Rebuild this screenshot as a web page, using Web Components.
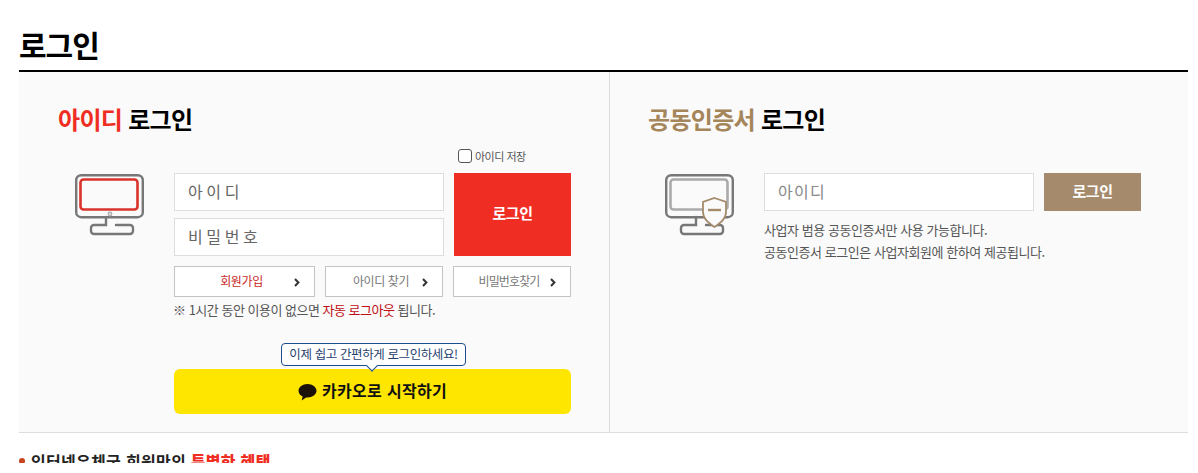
<!DOCTYPE html>
<html lang="ko">
<head>
<meta charset="utf-8">
<title>로그인</title>
<style>
html, body { margin: 0; background: #fff; }
body { font-family: "Noto Sans CJK KR", "Noto Sans", sans-serif; color: #333; }
</style>
</head>
<body>
<login-page>
  <id-login slot="left"></id-login>
  <cert-login slot="right"></cert-login>
</login-page>

<script>
const FONT = '"Noto Sans CJK KR", "Noto Sans", sans-serif';

class LoginPage extends HTMLElement {
  constructor() {
    super();
    this.attachShadow({ mode: 'open' }).innerHTML = `
    <style>
    :host { display: block; height: 463px; overflow: hidden; padding: 0 10px 0 19px; font-family: ${FONT}; }
    h1 { margin: 0; height: 70px; box-sizing: border-box; padding-top: 22px; font-size: 30px; line-height: 44px; letter-spacing: -1px; font-weight: 700; color: #000; }
    .panel { display: flex; box-sizing: border-box; height: 363px; background: #fafafa; border-top: 2px solid #000; border-bottom: 1px solid #ddd; }
    ::slotted([slot=left]) { width: 591px; border-right: 1px solid #ddd; }
    ::slotted([slot=right]) { flex: 1; }
    .benefit { margin: 16px 0 0; font-size: 16px; line-height: 24px; font-weight: 700; color: #222; display: flex; align-items: center; gap: 6px; letter-spacing: .3px; }
    .benefit i { width: 6px; height: 6px; border-radius: 50%; background: #c8451f; flex: none; }
    .benefit b { color: #f02d23; }
    </style>
    <h1>로그인</h1>
    <div class="panel"><slot name="left"></slot><slot name="right"></slot></div>
    <p class="benefit"><i></i><span>인터넷우체국 회원만의 <b>특별한 혜택</b></span></p>
    `;
  }
}

class PanelTitle extends HTMLElement {
  constructor() {
    super();
    this.attachShadow({ mode: 'open' }).innerHTML = `
    <style>
    :host { display: block; font-size: 24px; line-height: 36px; font-weight: 700; letter-spacing: -.7px; color: #000; }
    </style>
    <slot></slot>
    `;
  }
}

class TextField extends HTMLElement {
  constructor() {
    super();
    this.attachShadow({ mode: 'open' }).innerHTML = `
    <style>
    :host { display: flex; align-items: center; box-sizing: border-box; width: 270px; height: 38px; padding: 0 0 3px 13px; background: #fff; border: 1px solid #ddd; font-size: 16px; letter-spacing: var(--field-spacing, 3.6px); color: var(--field-color, #666); }
    </style>
    <slot></slot>
    `;
  }
}

class LinkButton extends HTMLElement {
  constructor() {
    super();
    this.attachShadow({ mode: 'open' }).innerHTML = `
    <style>
    :host { display: flex; align-items: center; box-sizing: border-box; height: 31px; background: #fff; border: 1px solid #c4c4c4; font-size: 12px; letter-spacing: -.4px; color: #777; }
    .label { flex: 1; padding: 0 0 3px 14px; text-align: center; }
    svg { flex: none; width: 6px; height: 9px; margin: 1px 14px 0 0; }
    </style>
    <span class="label"><slot></slot></span>
    <svg viewBox="0 0 6 9"><path d="M1 1l3.400 3.500L1 8" fill="none" stroke="#333" stroke-width="2"/></svg>
    `;
  }
}

class MonitorIcon extends HTMLElement {
  constructor() {
    super();
    const cert = this.hasAttribute('cert');
    const screen = cert
      ? `<rect x="5.500" y="5.500" width="57" height="30" rx="3" fill="none" stroke="#aaa" stroke-width="2.600"/>`
      : `<rect x="5.500" y="5.500" width="57" height="30" rx="3" fill="none" stroke="#d9332b" stroke-width="2.600"/>
         <circle cx="35" cy="40" r="1.800" fill="#ddd" stroke="#aaa" stroke-width="1.200"/>`;
    const shield = cert
      ? `<path d="M49.500 24L61 28v10c0 7-6 11-11.500 15-5.500-4-11.500-8-11.500-15V28z" fill="#fafafa" stroke="#a58b6c" stroke-width="1.800"/>
         <path d="M43 36h13" stroke="#a58b6c" stroke-width="2.400"/>`
      : '';
    this.attachShadow({ mode: 'open' }).innerHTML = `
    <style>
    :host { display: block; width: 69px; height: 62px; }
    svg { display: block; }
    </style>
    <svg width="69" height="62" viewBox="0 0 69 62">
      <rect x="1.200" y="1.200" width="66.600" height="42" rx="5" fill="none" stroke="#777" stroke-width="2.400"/>
      <path d="M31 43v8H19a3 3 0 0 0-3 3v3a3 3 0 0 0 3 3h36a3 3 0 0 0 3-3v-3a3 3 0 0 0-3-3H41" fill="none" stroke="#777" stroke-width="2.400" stroke-linecap="round"/>
      ${screen}${shield}
    </svg>
    `;
  }
}

class IdLogin extends HTMLElement {
  constructor() {
    super();
    this.attachShadow({ mode: 'open' }).innerHTML = `
    <style>
    :host { display: block; box-sizing: border-box; padding: 29px 0 0 39px; font-family: ${FONT}; }
    panel-title em { font-style: normal; color: #f02d23; }
    .save { display: flex; align-items: center; gap: 3px; height: 14px; margin: 12px 0 0 400px; font-size: 11px; letter-spacing: -.5px; color: #555; white-space: nowrap; }
    .save i { width: 12px; height: 12px; border: 1px solid #555; border-radius: 3px; background: #fff; flex: none; }
    .body { display: flex; margin: 10px 0 0 17px; }
    .icon-col { width: 99px; padding-top: 1px; }
    .form { width: 397px; display: grid; grid-template-columns: 270px 117px; column-gap: 10px; }
    .fields { display: grid; row-gap: 7px; }
    .go { display: flex; align-items: center; justify-content: center; padding-bottom: 4px; box-sizing: border-box; background: #f02d23; color: #fff; font-size: 15px; font-weight: 700; letter-spacing: -.4px; }
    .links { grid-column: 1 / 3; display: grid; grid-template-columns: 141px 118px 118px; column-gap: 10px; margin-top: 10px; }
    .links link-button:first-child { color: #c8281e; }
    .links link-button:last-child { letter-spacing: -.9px; }
    .note { grid-column: 1 / 3; margin: 4px 0 0 -1px; font-size: 13px; line-height: 17px; letter-spacing: -.5px; color: #555; }
    .note span { color: #c00d16; }
    .kakao { grid-column: 1 / 3; position: relative; margin-top: 51px; height: 45px; box-sizing: border-box; padding-bottom: 4px; display: flex; align-items: center; justify-content: center; gap: 5px; background: #ffe600; border-radius: 6px; font-size: 16px; font-weight: 700; letter-spacing: .3px; color: #111; }
    .kakao svg { width: 19px; height: 18px; margin-top: 4px; }
    .bubble { position: absolute; left: 107px; top: -26px; width: 185px; height: 23px; box-sizing: border-box; padding-bottom: 2px; display: flex; align-items: center; justify-content: center; background: #fff; border: 1px solid #1c4d8c; border-radius: 4px; font-size: 12.5px; font-weight: 400; letter-spacing: -.4px; color: #1f3f70; white-space: nowrap; }
    .bubble::after { content: ""; position: absolute; left: 86px; bottom: -5px; width: 7px; height: 7px; background: #fff; border-right: 1px solid #1c4d8c; border-bottom: 1px solid #1c4d8c; transform: rotate(45deg); }
    </style>
    <panel-title><em>아이디</em> 로그인</panel-title>
    <div class="save"><i></i>아이디 저장</div>
    <div class="body">
      <div class="icon-col"><monitor-icon></monitor-icon></div>
      <div class="form">
        <div class="fields"><text-field>아이디</text-field><text-field>비밀번호</text-field></div>
        <div class="go">로그인</div>
        <div class="links"><link-button>회원가입</link-button><link-button>아이디 찾기</link-button><link-button>비밀번호찾기</link-button></div>
        <p class="note">※ 1시간 동안 이용이 없으면 <span>자동 로그아웃</span> 됩니다.</p>
        <div class="kakao">
          <div class="bubble">이제 쉽고 간편하게 로그인하세요!</div>
          <svg viewBox="0 0 19 18"><path d="M9.500 1C4.500 1 .5 4 .5 7.800c0 2.500 1.700 4.600 4.200 5.800L3.600 17.500l4.600-3.100c.4.1.9.1 1.300.1 5 0 9-3 9-6.700S14.500 1 9.500 1z" fill="#1a1208"/></svg>
          <span>카카오로 시작하기</span>
        </div>
      </div>
    </div>
    `;
  }
}

class CertLogin extends HTMLElement {
  constructor() {
    super();
    this.attachShadow({ mode: 'open' }).innerHTML = `
    <style>
    :host { display: block; box-sizing: border-box; padding: 29px 0 0 38px; font-family: ${FONT}; --field-spacing: 1.3px; --field-color: #888; }
    panel-title em { font-style: normal; color: #a5855a; }
    .body { display: flex; margin: 36px 0 0 17px; }
    .icon-col { width: 99px; padding-top: 1px; }
    .row { display: flex; gap: 10px; }
    .go { display: flex; align-items: center; justify-content: center; box-sizing: border-box; padding-bottom: 4px; width: 97px; height: 38px; background: #a58b6c; color: #fff; font-size: 15px; font-weight: 700; letter-spacing: -.4px; }
    .info { margin: 8px 0 0; font-size: 13px; line-height: 22px; letter-spacing: -.45px; color: #555; }
    </style>
    <panel-title><em>공동인증서</em> 로그인</panel-title>
    <div class="body">
      <div class="icon-col"><monitor-icon cert></monitor-icon></div>
      <div>
        <div class="row"><text-field>아이디</text-field><div class="go">로그인</div></div>
        <p class="info">사업자 범용 공동인증서만 사용 가능합니다.<br>공동인증서 로그인은 사업자회원에 한하여 제공됩니다.</p>
      </div>
    </div>
    `;
  }
}

customElements.define('login-page', LoginPage);
customElements.define('panel-title', PanelTitle);
customElements.define('text-field', TextField);
customElements.define('link-button', LinkButton);
customElements.define('monitor-icon', MonitorIcon);
customElements.define('id-login', IdLogin);
customElements.define('cert-login', CertLogin);
</script>
</body>
</html>
